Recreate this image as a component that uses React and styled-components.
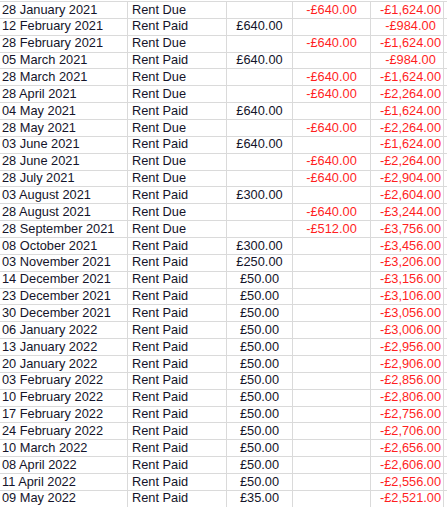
import React from 'react';
import styled, { createGlobalStyle } from 'styled-components';

const GlobalStyle = createGlobalStyle`
	html, body {
		margin: 0;
		padding: 0;
		background: #fff;
		overflow: hidden;
	}
`;

const Sheet = styled.div`
	width: 447px;
	height: 507px;
	overflow: hidden;
	padding-top: 1px;
	box-sizing: border-box;
	font-family: 'Liberation Sans', Arial, sans-serif;
	font-size: 12.8px;
	color: #14142a;
`;

const Row = styled.div`
	display: grid;
	grid-template-columns: 128px 99px 66px 78px 73px;
	height: 16.86px;
	box-sizing: border-box;
	border-top: 1px solid #dadada;
`;

const Cell = styled.div`
	display: flex;
	align-items: center;
	justify-content: ${props => props.align || 'flex-start'};
	padding: 0 ${props => (props.align === 'center' ? 0 : 3)}px 0 ${props => props.indent ?? 2}px;
	border-right: 1px solid #dadada;
	white-space: nowrap;
	overflow: hidden;
	line-height: 1;
	color: ${props => (props.negative ? '#ff1f1f' : 'inherit')};
`;

const rows = [
	['28 January 2021', 'Rent Due', '', '-£640.00', '-£1,624.00'],
	['12 February 2021', 'Rent Paid', '£640.00', '', '-£984.00'],
	['28 February 2021', 'Rent Due', '', '-£640.00', '-£1,624.00'],
	['05 March 2021', 'Rent Paid', '£640.00', '', '-£984.00'],
	['28 March 2021', 'Rent Due', '', '-£640.00', '-£1,624.00'],
	['28 April 2021', 'Rent Due', '', '-£640.00', '-£2,264.00'],
	['04 May 2021', 'Rent Paid', '£640.00', '', '-£1,624.00'],
	['28 May 2021', 'Rent Due', '', '-£640.00', '-£2,264.00'],
	['03 June 2021', 'Rent Paid', '£640.00', '', '-£1,624.00'],
	['28 June 2021', 'Rent Due', '', '-£640.00', '-£2,264.00'],
	['28 July 2021', 'Rent Due', '', '-£640.00', '-£2,904.00'],
	['03 August 2021', 'Rent Paid', '£300.00', '', '-£2,604.00'],
	['28 August 2021', 'Rent Due', '', '-£640.00', '-£3,244.00'],
	['28 September 2021', 'Rent Due', '', '-£512.00', '-£3,756.00'],
	['08 October 2021', 'Rent Paid', '£300.00', '', '-£3,456.00'],
	['03 November 2021', 'Rent Paid', '£250.00', '', '-£3,206.00'],
	['14 December 2021', 'Rent Paid', '£50.00', '', '-£3,156.00'],
	['23 December 2021', 'Rent Paid', '£50.00', '', '-£3,106.00'],
	['30 December 2021', 'Rent Paid', '£50.00', '', '-£3,056.00'],
	['06 January 2022', 'Rent Paid', '£50.00', '', '-£3,006.00'],
	['13 January 2022', 'Rent Paid', '£50.00', '', '-£2,956.00'],
	['20 January 2022', 'Rent Paid', '£50.00', '', '-£2,906.00'],
	['03 February 2022', 'Rent Paid', '£50.00', '', '-£2,856.00'],
	['10 February 2022', 'Rent Paid', '£50.00', '', '-£2,806.00'],
	['17 February 2022', 'Rent Paid', '£50.00', '', '-£2,756.00'],
	['24 February 2022', 'Rent Paid', '£50.00', '', '-£2,706.00'],
	['10 March 2022', 'Rent Paid', '£50.00', '', '-£2,656.00'],
	['08 April 2022', 'Rent Paid', '£50.00', '', '-£2,606.00'],
	['11 April 2022', 'Rent Paid', '£50.00', '', '-£2,556.00'],
	['09 May 2022', 'Rent Paid', '£35.00', '', '-£2,521.00']
];

export default function App() {
	return (
		<Sheet>
			<GlobalStyle />
			{rows.map(([date, type, paid, due, balance]) => (
				<Row key={date}>
					<Cell>{date}</Cell>
					<Cell indent={4}>{type}</Cell>
					<Cell align="center" indent={0}>{paid}</Cell>
					<Cell align="center" indent={0} negative>{due}</Cell>
					<Cell align="center" indent={7} negative>{balance}</Cell>
				</Row>
			))}
		</Sheet>
	);
}
